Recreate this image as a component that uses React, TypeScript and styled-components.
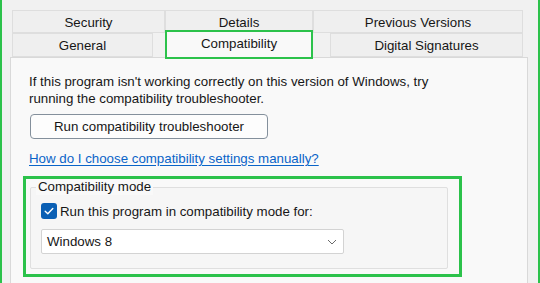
import React from "react";
import styled, { createGlobalStyle } from "styled-components";

const GREEN = "#2cc24b";
const FONT = `"Liberation Sans", Arial, sans-serif`;
const SIZE = "13.3px";

const Global = createGlobalStyle`
  html, body { margin: 0; padding: 0; }
  body { background: #f1f1f1; }
  * { box-sizing: border-box; }
`;

const Page = styled.div`
  width: 540px;
  height: 283px;
  overflow: hidden;
  background: #f1f1f1;
  border-left: 2px solid ${GREEN};
  border-right: 2px solid ${GREEN};
  padding: 10px 10px 0 8px;
  display: flex;
  flex-direction: column;
  font-family: ${FONT};
  font-size: ${SIZE};
  color: #161616;
`;

const TabStrip = styled.div`
  display: flex;
  flex-direction: column;
  padding: 0 5px 0 2px;
`;

const TabRow = styled.div<{ $h: number }>`
  display: grid;
  grid-template-columns: 153px 148px 210px;
  height: ${(p) => p.$h}px;
`;

const Tab = styled.div<{ $ml?: number; $mr?: number }>`
  display: flex;
  align-items: center;
  justify-content: center;
  padding-top: 1px;
  background: #efefef;
  border: 1px solid #dedede;
  margin-left: ${(p) => p.$ml ?? 0}px;
  margin-right: ${(p) => p.$mr ?? 0}px;
  white-space: nowrap;
`;

const ActiveTab = styled.div`
  display: flex;
  align-items: center;
  justify-content: center;
  background: #f9f9f9;
  border: 2px solid ${GREEN};
  margin-top: -3px;
  margin-bottom: -2px;
  padding-bottom: 2px;
  position: relative;
  z-index: 1;
  white-space: nowrap;
`;

const Panel = styled.div`
  flex: 1;
  background: #f9f9f9;
  border: 1px solid #d9d9d9;
  border-bottom: none;
  padding: 15px 18px 0 18px;
  display: flex;
  flex-direction: column;
  align-items: flex-start;
`;

const Intro = styled.p`
  margin: 0;
  line-height: 17px;
  max-width: 420px;
`;

const Button = styled.button`
  margin: 7px 0 0 1px;
  width: 238px;
  height: 25px;
  border: 1px solid #84909c;
  border-radius: 4px;
  background: #fdfdfd;
  font-family: ${FONT};
  font-size: ${SIZE};
  color: #161616;
  padding: 0;
`;

const HelpLink = styled.a`
  margin-top: 11px;
  line-height: 17px;
  color: #0a64c8;
  text-decoration: underline;
  text-underline-offset: 2px;
`;

const Highlight = styled.div`
  margin: 9px 0 0 -6px;
  width: 439px;
  height: 101px;
  border: 3px solid ${GREEN};
  padding: 0 11px 0 4px;
`;

const Group = styled.fieldset`
  margin: 0;
  height: 90px;
  border: 1px solid #dfdfdf;
  border-radius: 2px;
  background: #f6f6f6;
  padding: 0 10px 14px 10px;
  min-width: 0;
`;

const Legend = styled.legend`
  margin-left: -5px;
  padding: 0 2px;
  line-height: 16px;
  background: #f9f9f9;
`;

const CheckRow = styled.label`
  display: flex;
  align-items: center;
  gap: 3px;
  height: 16px;
  margin-top: 8px;
  white-space: nowrap;
`;

const Box = styled.span`
  width: 16px;
  height: 16px;
  border-radius: 3px;
  background: #0a5fb4;
  display: inline-flex;
  align-items: center;
  justify-content: center;
  flex: none;
`;

const Select = styled.div`
  margin-top: 10px;
  width: 303px;
  height: 25px;
  background: #ffffff;
  border: 1px solid #d3d3d3;
  border-radius: 2px;
  display: flex;
  align-items: center;
  justify-content: space-between;
  padding: 0 6px 0 5px;
`;

export default function App() {
  return (
    <>
      <Global />
      <Page>
        <TabStrip>
          <TabRow $h={23}>
            <Tab>Security</Tab>
            <Tab>Details</Tab>
            <Tab>Previous Versions</Tab>
          </TabRow>
          <TabRow $h={24}>
            <Tab $mr={12}>General</Tab>
            <ActiveTab>Compatibility</ActiveTab>
            <Tab $ml={17}>Digital Signatures</Tab>
          </TabRow>
        </TabStrip>
        <Panel>
          <Intro>
            If this program isn't working correctly on this version of Windows, try
            running the compatibility troubleshooter.
          </Intro>
          <Button>Run compatibility troubleshooter</Button>
          <HelpLink href="#">How do I choose compatibility settings manually?</HelpLink>
          <Highlight>
            <Group>
              <Legend>Compatibility mode</Legend>
              <CheckRow>
                <Box>
                  <svg width="12" height="12" viewBox="0 0 12 12">
                    <path d="M2.2 6.3 L4.8 8.8 L9.8 3.4" fill="none" stroke="#fff" strokeWidth="1.4" strokeLinecap="round" strokeLinejoin="round" />
                  </svg>
                </Box>
                Run this program in compatibility mode for:
              </CheckRow>
              <Select>
                <span>Windows 8</span>
                <svg width="10" height="6" viewBox="0 0 10 6">
                  <path d="M1 1 L5 5 L9 1" fill="none" stroke="#6a6a6a" strokeWidth="1" />
                </svg>
              </Select>
            </Group>
          </Highlight>
        </Panel>
      </Page>
    </>
  );
}
